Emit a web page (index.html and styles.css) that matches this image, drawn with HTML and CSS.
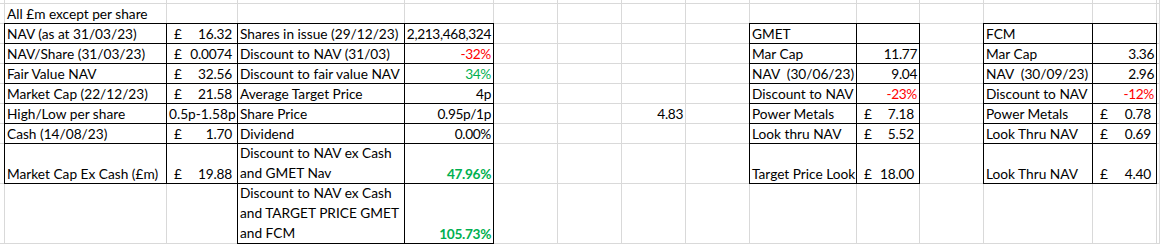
FILE: index.html
```html
<!DOCTYPE html>
<html>
<head>
<meta charset="utf-8">
<title>Sheet</title>
<link rel="stylesheet" href="styles.css">
</head>
<body>
<table class="sheet">
<colgroup>
<col class="w0"><col class="wa"><col class="wb"><col class="wc"><col class="wd"><col class="we"><col class="we"><col class="we"><col class="we"><col class="wi"><col class="wj"><col class="we"><col class="wl"><col class="we"><col class="wn">
</colgroup>
<tr class="r0"><td></td><td></td><td></td><td></td><td></td><td></td><td></td><td></td><td></td><td></td><td></td><td></td><td></td><td></td><td></td></tr>
<tr class="r1"><td></td><td>All £m except per share</td><td></td><td></td><td></td><td></td><td></td><td></td><td></td><td></td><td></td><td></td><td></td><td></td><td></td></tr>
<tr class="r1"><td></td><td class="b">NAV (as at 31/03/23)</td><td class="b"><div class="acc"><span>£</span><span>16.32</span></div></td><td class="b">Shares in issue (29/12/23)</td><td class="b num">2,213,468,324</td><td></td><td></td><td></td><td></td><td class="b">GMET</td><td class="b"></td><td></td><td class="b">FCM</td><td class="b"></td><td></td></tr>
<tr class="r1"><td></td><td class="b">NAV/Share (31/03/23)</td><td class="b"><div class="acc"><span>£</span><span>0.0074</span></div></td><td class="b">Discount to NAV (31/03)</td><td class="b num red">-32%</td><td></td><td></td><td></td><td></td><td class="b">Mar Cap</td><td class="b num">11.77</td><td></td><td class="b">Mar Cap</td><td class="b num">3.36</td><td></td></tr>
<tr class="r1"><td></td><td class="b">Fair Value NAV</td><td class="b"><div class="acc"><span>£</span><span>32.56</span></div></td><td class="b">Discount to fair value NAV</td><td class="b num green">34%</td><td></td><td></td><td></td><td></td><td class="b pre">NAV  (30/06/23)</td><td class="b num">9.04</td><td></td><td class="b pre">NAV  (30/09/23)</td><td class="b num">2.96</td><td></td></tr>
<tr class="r1"><td></td><td class="b">Market Cap (22/12/23)</td><td class="b"><div class="acc"><span>£</span><span>21.58</span></div></td><td class="b">Average Target Price</td><td class="b num">4p</td><td></td><td></td><td></td><td></td><td class="b">Discount to NAV</td><td class="b num red">-23%</td><td></td><td class="b">Discount to NAV</td><td class="b num red">-12%</td><td></td></tr>
<tr class="r1"><td></td><td class="b">High/Low per share</td><td class="b">0.5p-1.58p</td><td class="b">Share Price</td><td class="b num">0.95p/1p</td><td></td><td></td><td class="num">4.83</td><td></td><td class="b">Power Metals</td><td class="b"><div class="acc"><span>£</span><span>7.18</span></div></td><td></td><td class="b">Power Metals</td><td class="b"><div class="acc"><span>£</span><span>0.78</span></div></td><td></td></tr>
<tr class="r1"><td></td><td class="b">Cash (14/08/23)</td><td class="b"><div class="acc"><span>£</span><span>1.70</span></div></td><td class="b">Dividend</td><td class="b num">0.00%</td><td></td><td></td><td></td><td></td><td class="b">Look thru NAV</td><td class="b"><div class="acc"><span>£</span><span>5.52</span></div></td><td></td><td class="b">Look Thru NAV</td><td class="b"><div class="acc"><span>£</span><span>0.69</span></div></td><td></td></tr>
<tr class="r2"><td></td><td class="b">Market Cap Ex Cash (£m)</td><td class="b"><div class="acc"><span>£</span><span>19.88</span></div></td><td class="b"><div class="wrap">Discount to NAV ex Cash<br>and GMET Nav</div></td><td class="b num green bold">47.96%</td><td></td><td></td><td></td><td></td><td class="b">Target Price Look</td><td class="b"><div class="acc"><span>£</span><span>18.00</span></div></td><td></td><td class="b">Look Thru NAV</td><td class="b"><div class="acc"><span>£</span><span>4.40</span></div></td><td></td></tr>
<tr class="r3"><td></td><td></td><td></td><td class="b"><div class="wrap">Discount to NAV ex Cash<br>and TARGET PRICE GMET<br>and FCM</div></td><td class="b num green bold">105.73%</td><td></td><td></td><td></td><td></td><td></td><td></td><td></td><td></td><td></td><td></td></tr>
</table>
</body>
</html>
```

FILE: styles.css
```css
html, body {
  margin: 0;
  padding: 0;
  background: #ffffff;
  overflow: hidden;
  width: 1160px;
  height: 245px;
}

.sheet {
  margin: -1px 0 0 -1px;
  border-collapse: separate;
  border-spacing: 1px;
  background: #d9d9d9;
  table-layout: fixed;
  width: 1161px;
  font-family: Lato, "Liberation Sans", sans-serif;
  font-size: 13.7px;
  color: #000000;
}

.w0 { width: 4px; }
.wa { width: 161px; }
.wb { width: 70px; }
.wc { width: 166px; }
.wd { width: 88px; }
.we { width: 63px; }
.wi { width: 106px; }
.wj { width: 62px; }
.wl { width: 108px; }
.wn { width: 2px; }

.sheet td {
  background: #ffffff;
  padding: 0 0 0 2px;
  vertical-align: bottom;
  white-space: nowrap;
  overflow: hidden;
  line-height: 19px;
  height: 19px;
  box-sizing: content-box;
}

.sheet .r0 td { height: 3px; line-height: 3px; padding: 0; }
.sheet .r2 td { height: 39px; }
.sheet .r3 td { height: 59px; }
.sheet td:first-child,
.sheet td:last-child { padding: 0; }

.sheet td.b {
  box-shadow: 0 0 0 1px #000000;
}

.sheet td.num {
  text-align: right;
  padding: 0 2px 0 0;
  letter-spacing: -0.35px;
}

.sheet td.pre { white-space: pre; }

.red { color: #ff0000; }
.green { color: #00b050; }
.bold { font-weight: bold; }

.wrap {
  line-height: 20px;
  margin-top: -1px;
}

.acc {
  display: flex;
  justify-content: space-between;
  padding: 0 5px 0 5px;
  letter-spacing: -0.2px;
}
```
